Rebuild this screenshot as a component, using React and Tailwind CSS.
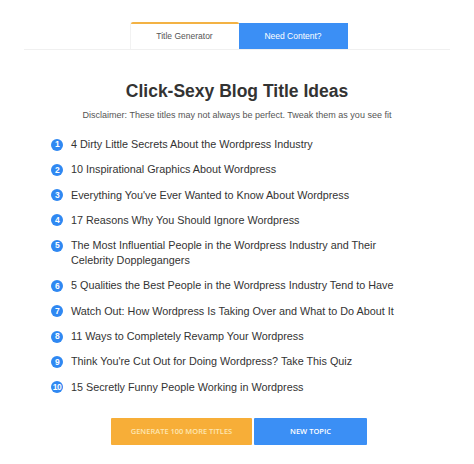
import React from "react";

const titles = [
  "4 Dirty Little Secrets About the Wordpress Industry",
  "10 Inspirational Graphics About Wordpress",
  "Everything You've Ever Wanted to Know About Wordpress",
  "17 Reasons Why You Should Ignore Wordpress",
  "The Most Influential People in the Wordpress Industry and Their Celebrity Dopplegangers",
  "5 Qualities the Best People in the Wordpress Industry Tend to Have",
  "Watch Out: How Wordpress Is Taking Over and What to Do About It",
  "11 Ways to Completely Revamp Your Wordpress",
  "Think You're Cut Out for Doing Wordpress? Take This Quiz",
  "15 Secretly Funny People Working in Wordpress",
];

const App = () => {
  return (
    <div
      className="w-[474px] h-[464px] bg-white pt-[22px]"
      style={{ fontFamily: '"Liberation Sans", Arial, sans-serif' }}
    >
      {/* Tabs */}
      <div className="mx-[24px] pl-[4px] flex justify-center border-b border-[#f0f0f0] h-[28px]">
        <div className="w-[108px] border-t-2 border-[#f3b244] bg-white flex items-center justify-center text-[8.5px] text-[#555] rounded-t-[2px] shadow-[-1px_0_0_#f2f2f2]">
          Title Generator
        </div>
        <div className="w-[109px] mt-[1px] bg-[#3b8ff5] flex items-center justify-center text-[8.5px] text-white">
          Need Content?
        </div>
      </div>

      <h1 className="mt-[30px] text-center text-[17.5px] leading-[22px] font-bold text-[#333]">
        Click-Sexy Blog Title Ideas
      </h1>
      <p className="mt-[7px] text-center text-[9px] leading-[12px] text-[#555]">
        Disclaimer: These titles may not always be perfect. Tweak them as you see fit
      </p>

      {/* List */}
      <ol className="mt-[16px] ml-[51px] flex flex-col gap-[10.3px]">
        {titles.map((t, i) => (
          <li key={i} className="flex items-start text-[10.8px] leading-[15px] text-[#333]">
            <span className="mt-[1.5px] mr-[8px] w-[12px] h-[12px] shrink-0 rounded-full bg-[#2f88f2] text-white text-[8.5px] font-bold flex items-center justify-center leading-none tracking-[-0.5px]">
              {i + 1}
            </span>
            <span className="max-w-[345px]">{t}</span>
          </li>
        ))}
      </ol>

      {/* Buttons */}
      <div className="mt-[23px] ml-[4px] flex justify-center gap-[2px]" style={{ fontFamily: '"Open Sans", sans-serif' }}>
        <button className="w-[141px] h-[27px] bg-[#f7ae38] text-[#fde7b3] text-[7.5px] font-semibold uppercase rounded-[1px]">
          Generate 100 More Titles
        </button>
        <button className="w-[113px] h-[27px] bg-[#3b8ff5] text-white text-[7.5px] font-semibold uppercase rounded-[1px]">
          New Topic
        </button>
      </div>
    </div>
  );
};

export default App;
